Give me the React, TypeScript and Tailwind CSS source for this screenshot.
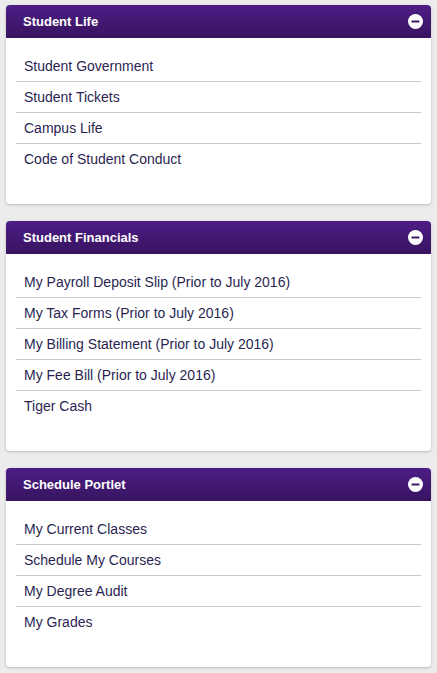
const panels: { title: string; links: string[] }[] = [
  {
    title: 'Student Life',
    links: ['Student Government', 'Student Tickets', 'Campus Life', 'Code of Student Conduct'],
  },
  {
    title: 'Student Financials',
    links: [
      'My Payroll Deposit Slip (Prior to July 2016)',
      'My Tax Forms (Prior to July 2016)',
      'My Billing Statement (Prior to July 2016)',
      'My Fee Bill (Prior to July 2016)',
      'Tiger Cash',
    ],
  },
  {
    title: 'Schedule Portlet',
    links: ['My Current Classes', 'Schedule My Courses', 'My Degree Audit', 'My Grades'],
  },
];

function MinusIcon() {
  return (
    <svg width="15" height="15" viewBox="0 0 15 15" aria-hidden="true">
      <circle cx="7.5" cy="7.5" r="7.5" fill="#ffffff" />
      <rect x="3.5" y="6.4" width="8" height="2.2" rx="0.5" fill="#3b1a63" />
    </svg>
  );
}

function Portlet({ title, links }: { title: string; links: string[] }) {
  return (
    <section className="rounded-[4px] bg-white shadow-[0_1px_3px_rgba(0,0,0,0.22)] overflow-hidden">
      <header className="flex h-[33px] items-center justify-between bg-gradient-to-b from-[#4c1d86] to-[#38145f] pl-[17px] pr-[8px]">
        <h2 className="text-[13px] font-bold text-white">{title}</h2>
        <MinusIcon />
      </header>
      <ul className="px-[10px] pt-[13px] pb-[29px]">
        {links.map((link, i) => (
          <li
            key={link}
            className={
              i < links.length - 1
                ? 'flex h-[31px] items-center border-b border-[#c9c9c9] pl-[8px]'
                : 'flex h-[31px] items-center pl-[8px]'
            }
          >
            <a href="#" className="text-[14px] text-[#2b1f52]">
              {link}
            </a>
          </li>
        ))}
      </ul>
    </section>
  );
}

export default function App() {
  return (
    <div
      className="min-h-[673px] bg-[#ececec] px-[6px] pt-[5px] flex flex-col gap-[17px]"
      style={{ fontFamily: '"Liberation Sans", Arial, sans-serif' }}
    >
      {panels.map((p) => (
        <Portlet key={p.title} title={p.title} links={p.links} />
      ))}
    </div>
  );
}
